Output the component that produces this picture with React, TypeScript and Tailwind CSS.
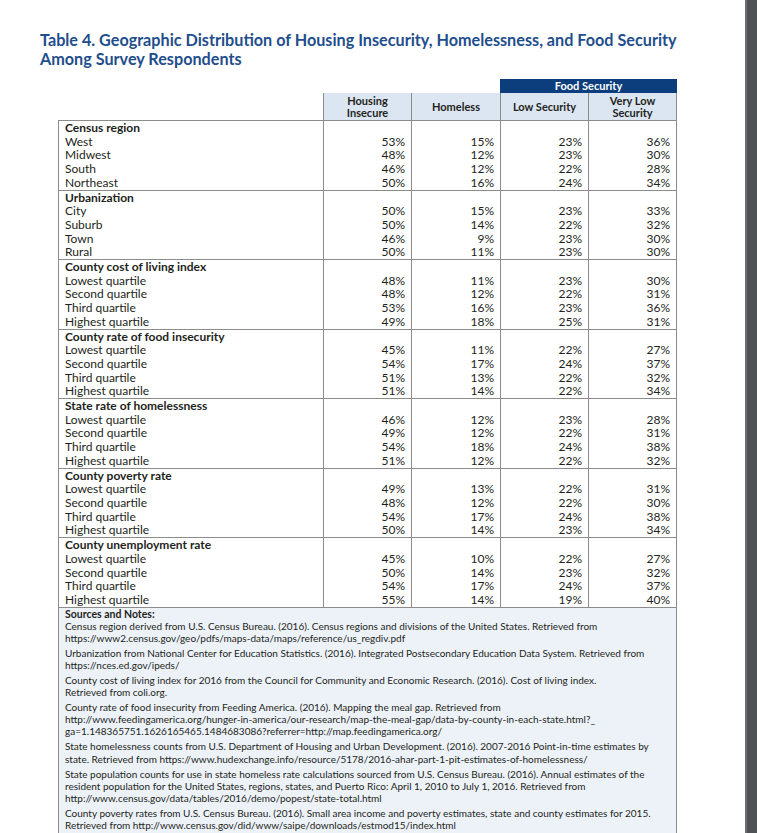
import React from "react"

type Row = [string, number, number, number, number]
type Group = { title: string; rows: Row[] }

const groups: Group[] = [
  {
    title: "Census region",
    rows: [
      ["West", 53, 15, 23, 36],
      ["Midwest", 48, 12, 23, 30],
      ["South", 46, 12, 22, 28],
      ["Northeast", 50, 16, 24, 34],
    ],
  },
  {
    title: "Urbanization",
    rows: [
      ["City", 50, 15, 23, 33],
      ["Suburb", 50, 14, 22, 32],
      ["Town", 46, 9, 23, 30],
      ["Rural", 50, 11, 23, 30],
    ],
  },
  {
    title: "County cost of living index",
    rows: [
      ["Lowest quartile", 48, 11, 23, 30],
      ["Second quartile", 48, 12, 22, 31],
      ["Third quartile", 53, 16, 23, 36],
      ["Highest quartile", 49, 18, 25, 31],
    ],
  },
  {
    title: "County rate of food insecurity",
    rows: [
      ["Lowest quartile", 45, 11, 22, 27],
      ["Second quartile", 54, 17, 24, 37],
      ["Third quartile", 51, 13, 22, 32],
      ["Highest quartile", 51, 14, 22, 34],
    ],
  },
  {
    title: "State rate of homelessness",
    rows: [
      ["Lowest quartile", 46, 12, 23, 28],
      ["Second quartile", 49, 12, 22, 31],
      ["Third quartile", 54, 18, 24, 38],
      ["Highest quartile", 51, 12, 22, 32],
    ],
  },
  {
    title: "County poverty rate",
    rows: [
      ["Lowest quartile", 49, 13, 22, 31],
      ["Second quartile", 48, 12, 22, 30],
      ["Third quartile", 54, 17, 24, 38],
      ["Highest quartile", 50, 14, 23, 34],
    ],
  },
  {
    title: "County unemployment rate",
    rows: [
      ["Lowest quartile", 45, 10, 22, 27],
      ["Second quartile", 50, 14, 23, 32],
      ["Third quartile", 54, 17, 24, 37],
      ["Highest quartile", 55, 14, 19, 40],
    ],
  },
]

const notes: string[][] = [
  [
    "Census region derived from U.S. Census Bureau. (2016). Census regions and divisions of the United States. Retrieved from",
    "https://www2.census.gov/geo/pdfs/maps-data/maps/reference/us_regdiv.pdf",
  ],
  [
    "Urbanization from National Center for Education Statistics. (2016). Integrated Postsecondary Education Data System. Retrieved from",
    "https://nces.ed.gov/ipeds/",
  ],
  [
    "County cost of living index for 2016 from the Council for Community and Economic Research. (2016). Cost of living index.",
    "Retrieved from coli.org.",
  ],
  [
    "County rate of food insecurity from Feeding America. (2016). Mapping the meal gap. Retrieved from",
    "http://www.feedingamerica.org/hunger-in-america/our-research/map-the-meal-gap/data-by-county-in-each-state.html?_",
    "ga=1.148365751.1626165465.1484683086?referrer=http://map.feedingamerica.org/",
  ],
  [
    "State homelessness counts from U.S. Department of Housing and Urban Development. (2016). 2007-2016 Point-in-time estimates by",
    "state. Retrieved from https://www.hudexchange.info/resource/5178/2016-ahar-part-1-pit-estimates-of-homelessness/",
  ],
  [
    "State population counts for use in state homeless rate calculations sourced from U.S. Census Bureau. (2016). Annual estimates of the",
    "resident population for the United States, regions, states, and Puerto Rico: April 1, 2010 to July 1, 2016. Retrieved from",
    "http://www.census.gov/data/tables/2016/demo/popest/state-total.html",
  ],
  [
    "County poverty rates from U.S. Census Bureau. (2016). Small area income and poverty estimates, state and county estimates for 2015.",
    "Retrieved from http://www.census.gov/did/www/saipe/downloads/estmod15/index.html",
  ],
]

const widths = ["w-[88px]", "w-[89px]", "w-[88px]", "w-[89px]"]

function GroupBlock({ group }: { group: Group }) {
  return (
    <div className="flex border-b border-[#8c8c8c] leading-[13.7px]">
      <div className="w-[265px] border-l border-[#8c8c8c] pl-[6px]">
        <div className="font-bold">{group.title}</div>
        {group.rows.map((r) => (
          <div key={r[0]}>{r[0]}</div>
        ))}
      </div>
      {widths.map((w, i) => (
        <div key={i} className={`${w} border-l border-[#8c8c8c] pr-[6px] text-right ${i === 3 ? "border-r" : ""}`}>
          <div>&nbsp;</div>
          {group.rows.map((r) => (
            <div key={r[0]}>{r[i + 1]}%</div>
          ))}
        </div>
      ))}
    </div>
  )
}

export default function App() {
  return (
    <div className="flex w-[757px] h-[833px] overflow-hidden bg-white text-[#231f20]" style={{ fontFamily: "Lato, 'Open Sans', sans-serif" }}>
      <div className="flex-1 pl-[40px] pt-[30px]">
        <h1 className="text-[16.2px] font-bold leading-[19px] text-[#1f4e8c]">
          Table 4. Geographic Distribution of Housing Insecurity, Homelessness, and Food Security
          <br />
          Among Survey Respondents
        </h1>

        <div className="ml-[18px] mt-[11px] w-[619px] text-[12px]">
          <div className="flex">
            <div className="w-[442px]" />
            <div className="w-[177px] h-[14px] bg-[#0c3d7c] text-white text-center font-bold text-[11px] leading-[14px]">
              Food Security
            </div>
          </div>
          <div className="flex h-[27px] text-[11px] font-bold leading-[12px]">
            <div className="w-[265px]" />
            <div className="w-[88px] flex items-center justify-center text-center bg-[#dce6f2] border-l border-[#8c8c8c]">
              Housing<br />Insecure
            </div>
            <div className="w-[89px] flex items-center justify-center bg-[#dce6f2] border-l border-[#8c8c8c]">
              Homeless
            </div>
            <div className="w-[88px] flex items-center justify-center bg-[#dce6f2] border-l border-[#8c8c8c]">
              Low Security
            </div>
            <div className="w-[89px] flex items-center justify-center text-center bg-[#dce6f2] border-x border-[#8c8c8c]">
              Very Low<br />Security
            </div>
          </div>
          <div className="border-t border-[#8c8c8c]">
            {groups.map((g) => (
              <GroupBlock key={g.title} group={g} />
            ))}
          </div>
          <div className="bg-[#edf2f9] border-x border-[#8c8c8c] pl-[6px] pb-[20px] text-[10px] leading-[12.1px] whitespace-nowrap">
            <div className="font-bold text-[10.5px] leading-[12px]">Sources and Notes:</div>
            {notes.map((p, i) => (
              <div key={i} className={i === 0 ? "" : "mt-[3px]"}>
                {p.map((line, j) => (
                  <div key={j}>{line}</div>
                ))}
              </div>
            ))}
          </div>
        </div>
      </div>
      <div className="w-[12px] h-full bg-[#4f5356] border-l-2 border-[#6b6e71]" />
    </div>
  )
}
